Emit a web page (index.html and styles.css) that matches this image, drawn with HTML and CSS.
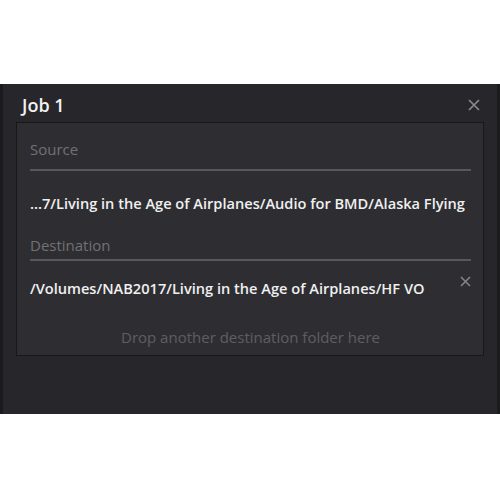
FILE: index.html
```html
<!DOCTYPE html>
<html>
<head>
<meta charset="utf-8">
<link rel="stylesheet" href="styles.css">
</head>
<body>
<div class="top-space"></div>
<div class="panel">
  <div class="header">
    <span class="title">Job 1</span>
    <svg class="close" width="12" height="12" viewBox="0 0 12 12"><path d="M1 1L11 11M11 1L1 11" stroke="#8c8c90" stroke-width="1.6"/></svg>
  </div>
  <div class="box">
    <div class="label first">Source</div>
    <div class="path src">...7/Living in the Age of Airplanes/Audio for BMD/Alaska Flying</div>
    <div class="label second">Destination</div>
    <div class="path dest">
      <span>/Volumes/NAB2017/Living in the Age of Airplanes/HF VO</span>
      <svg class="x" width="11" height="11" viewBox="0 0 11 11"><path d="M1 1L10 10M10 1L1 10" stroke="#86868a" stroke-width="1.5"/></svg>
    </div>
    <div class="drop">Drop another destination folder here</div>
  </div>
</div>
</body>
</html>
```
FILE: styles.css
```css
html, body { margin: 0; padding: 0; background: #fff; }
body { width: 500px; height: 500px; font-family: "Open Sans", sans-serif; }
.top-space { height: 84px; }
.panel {
  height: 330px;
  background: #27272b;
  border-left: 3px solid #1b1b1d;
  border-right: 3px solid #1b1b1d;
  box-sizing: border-box;
  padding: 0 13px 0 13px;
}
.header {
  height: 38px;
  box-sizing: border-box;
  padding: 3px 4px 0 6px;
  display: flex;
  align-items: center;
  justify-content: space-between;
}
.title { color: #f2f2f2; font-size: 18px; font-weight: 600; line-height: 24px; }
.close { display: block; }
.box {
  background: #2e2e32;
  border: 1px solid #18181a;
  height: 234px;
  box-sizing: border-box;
  padding: 16px 12px 0 13px;
}
.label {
  color: #717175;
  font-size: 15px;
  line-height: 20px;
  border-bottom: 2px solid #58585c;
}
.first { padding-bottom: 10px; }
.second { padding-bottom: 4px; }
.path {
  color: #f0f0f0;
  font-size: 14.6px;
  font-weight: 600;
  line-height: 20px;
  white-space: nowrap;
}
.src { padding: 22px 0 22px; }
.dest {
  padding: 17px 0 0;
  height: 20px;
  display: flex;
  justify-content: space-between;
  align-items: center;
}
.x { display: block; margin-top: -14px; margin-right: 0; }
.drop {
  margin-top: 29px;
  text-align: center;
  color: #5e5e62;
  font-size: 15px;
  line-height: 20px;
}
```
